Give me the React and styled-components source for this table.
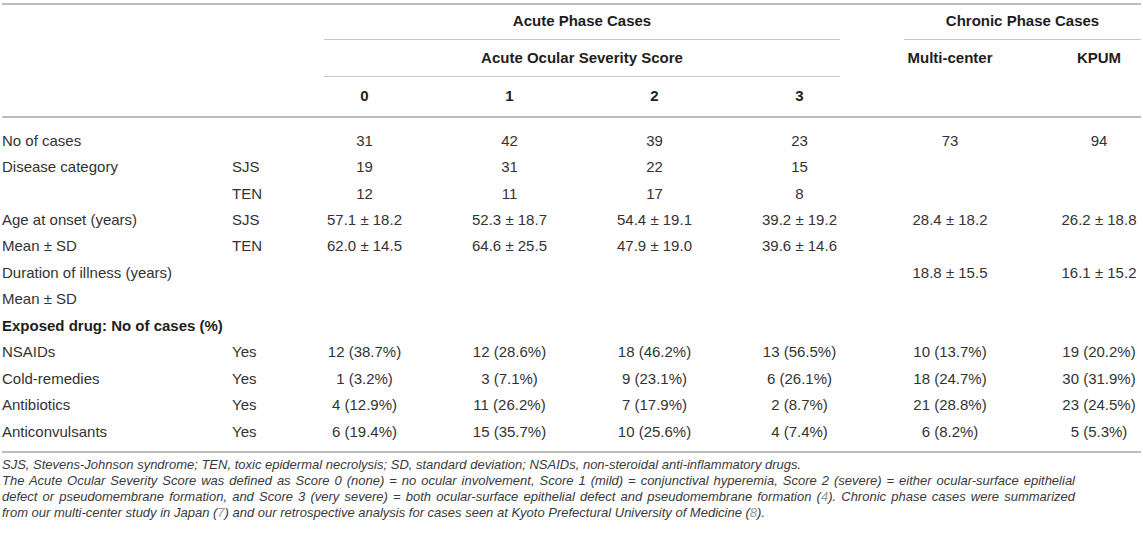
import React from 'react';
import styled, { createGlobalStyle } from 'styled-components';

const COLS = '230px 60px repeat(4, 145px) 156px 113px';

const Global = createGlobalStyle`
  html, body { margin: 0; padding: 0; background: #fff; }
  body { font-family: "Liberation Sans", Arial, Helvetica, sans-serif; color: #333; }
`;

const Page = styled.div`
  padding: 3px 2px 0;
  width: 1139px;
`;

const Table = styled.div`
  border-top: 2px solid #bcbcbc;
  border-bottom: 2px solid #bcbcbc;
`;

const Head = styled.div`
  display: grid;
  grid-template-columns: ${COLS};
  grid-template-rows: 35px 37px 39px;
  border-bottom: 2px solid #bcbcbc;
  font-weight: bold;
  font-size: 15px;
  line-height: 17px;
  color: #1e1e1e;
`;

const HeadCell = styled.div`
  grid-column: ${(p) => p.$col};
  grid-row: ${(p) => p.$row};
  display: flex;
  align-items: center;
  justify-content: center;
  padding-left: ${(p) => p.$pl || 0}px;
  padding-bottom: ${(p) => p.$pb || 2}px;
`;

const GroupCell = styled.div`
  grid-column: ${(p) => p.$col};
  grid-row: ${(p) => p.$row};
  margin: 0 ${(p) => p.$mr}px 0 32px;
  border-bottom: 1px solid #c6c6c6;
  display: flex;
  align-items: center;
  justify-content: center;
  padding-bottom: ${(p) => p.$pb || 2}px;
`;

const Body = styled.div`
  padding: 9px 0 7px;
  font-size: 15px;
  line-height: 17px;
`;

const Row = styled.div`
  display: grid;
  grid-template-columns: ${COLS};
  height: 26.45px;
  align-items: center;
`;

const Label = styled.div`
  grid-column: ${(p) => p.$span || 'auto'};
  text-align: left;
  white-space: nowrap;
  font-weight: ${(p) => (p.$bold ? 'bold' : 'normal')};
  color: ${(p) => (p.$bold ? '#1e1e1e' : '#333')};
`;

const Val = styled.div`
  text-align: center;
  white-space: nowrap;
  padding-left: ${(p) => p.$pl || 0}px;
`;

const Notes = styled.div`
  padding-top: 4px;
  font-size: 13px;
  line-height: 16px;
  font-style: italic;
  color: #3a3a3a;
`;

const NoteLine = styled.div`
  width: ${(p) => (p.$justify ? '1073px' : 'auto')};
  white-space: nowrap;
  text-align: left;
  text-align-last: ${(p) => (p.$justify ? 'justify' : 'left')};
  ${(p) => (p.$justify ? 'white-space: normal;' : '')}
`;

const Ref = styled.span`
  color: #9a9a9a;
`;

const rows = [
  { label: 'No of cases', sub: '', vals: ['31', '42', '39', '23', '73', '94'] },
  { label: 'Disease category', sub: 'SJS', vals: ['19', '31', '22', '15', '', ''] },
  { label: '', sub: 'TEN', vals: ['12', '11', '17', '8', '', ''] },
  { label: 'Age at onset (years)', sub: 'SJS', vals: ['57.1 ± 18.2', '52.3 ± 18.7', '54.4 ± 19.1', '39.2 ± 19.2', '28.4 ± 18.2', '26.2 ± 18.8'] },
  { label: 'Mean ± SD', sub: 'TEN', vals: ['62.0 ± 14.5', '64.6 ± 25.5', '47.9 ± 19.0', '39.6 ± 14.6', '', ''] },
  { label: 'Duration of illness (years)', sub: '', vals: ['', '', '', '', '18.8 ± 15.5', '16.1 ± 15.2'] },
  { label: 'Mean ± SD', sub: '', vals: ['', '', '', '', '', ''] },
  { section: 'Exposed drug: No of cases (%)' },
  { label: 'NSAIDs', sub: 'Yes', vals: ['12 (38.7%)', '12 (28.6%)', '18 (46.2%)', '13 (56.5%)', '10 (13.7%)', '19 (20.2%)'] },
  { label: 'Cold-remedies', sub: 'Yes', vals: ['1 (3.2%)', '3 (7.1%)', '9 (23.1%)', '6 (26.1%)', '18 (24.7%)', '30 (31.9%)'] },
  { label: 'Antibiotics', sub: 'Yes', vals: ['4 (12.9%)', '11 (26.2%)', '7 (17.9%)', '2 (8.7%)', '21 (28.8%)', '23 (24.5%)'] },
  { label: 'Anticonvulsants', sub: 'Yes', vals: ['6 (19.4%)', '15 (35.7%)', '10 (25.6%)', '4 (7.4%)', '6 (8.2%)', '5 (5.3%)'] },
];

export default function App() {
  return (
    <Page>
      <Global />
      <Table>
        <Head>
          <GroupCell $col="3 / 7" $row="1" $mr={32} $pb={4}>Acute Phase Cases</GroupCell>
          <GroupCell $col="7 / 9" $row="1" $mr={0} $pb={4}>Chronic Phase Cases</GroupCell>
          <GroupCell $col="3 / 7" $row="2" $mr={32}>Acute Ocular Severity Score</GroupCell>
          <HeadCell $col="7" $row="2">Multi-center</HeadCell>
          <HeadCell $col="8" $row="2" $pl={29}>KPUM</HeadCell>
          {['0', '1', '2', '3'].map((s, i) => (
            <HeadCell key={s} $col={`${i + 3}`} $row="3" $pb={3}>{s}</HeadCell>
          ))}
        </Head>
        <Body>
          {rows.map((r, i) =>
            r.section ? (
              <Row key={i}>
                <Label $span="1 / 6" $bold>{r.section}</Label>
              </Row>
            ) : (
              <Row key={i}>
                <Label>{r.label}</Label>
                <Label>{r.sub}</Label>
                {r.vals.map((v, j) => (
                  <Val key={j} $pl={j === 5 ? 29 : 0}>{v}</Val>
                ))}
              </Row>
            )
          )}
        </Body>
      </Table>
      <Notes>
        <NoteLine>
          SJS, Stevens-Johnson syndrome; TEN, toxic epidermal necrolysis; SD, standard deviation; NSAIDs, non-steroidal anti-inflammatory drugs.
        </NoteLine>
        <NoteLine $justify>
          The Acute Ocular Severity Score was defined as Score 0 (none) = no ocular involvement, Score 1 (mild) = conjunctival hyperemia, Score 2 (severe) = either ocular-surface epithelial
        </NoteLine>
        <NoteLine $justify>
          defect or pseudomembrane formation, and Score 3 (very severe) = both ocular-surface epithelial defect and pseudomembrane formation (<Ref>4</Ref>). Chronic phase cases were summarized
        </NoteLine>
        <NoteLine>
          from our multi-center study in Japan (<Ref>7</Ref>) and our retrospective analysis for cases seen at Kyoto Prefectural University of Medicine (<Ref>8</Ref>).
        </NoteLine>
      </Notes>
    </Page>
  );
}
